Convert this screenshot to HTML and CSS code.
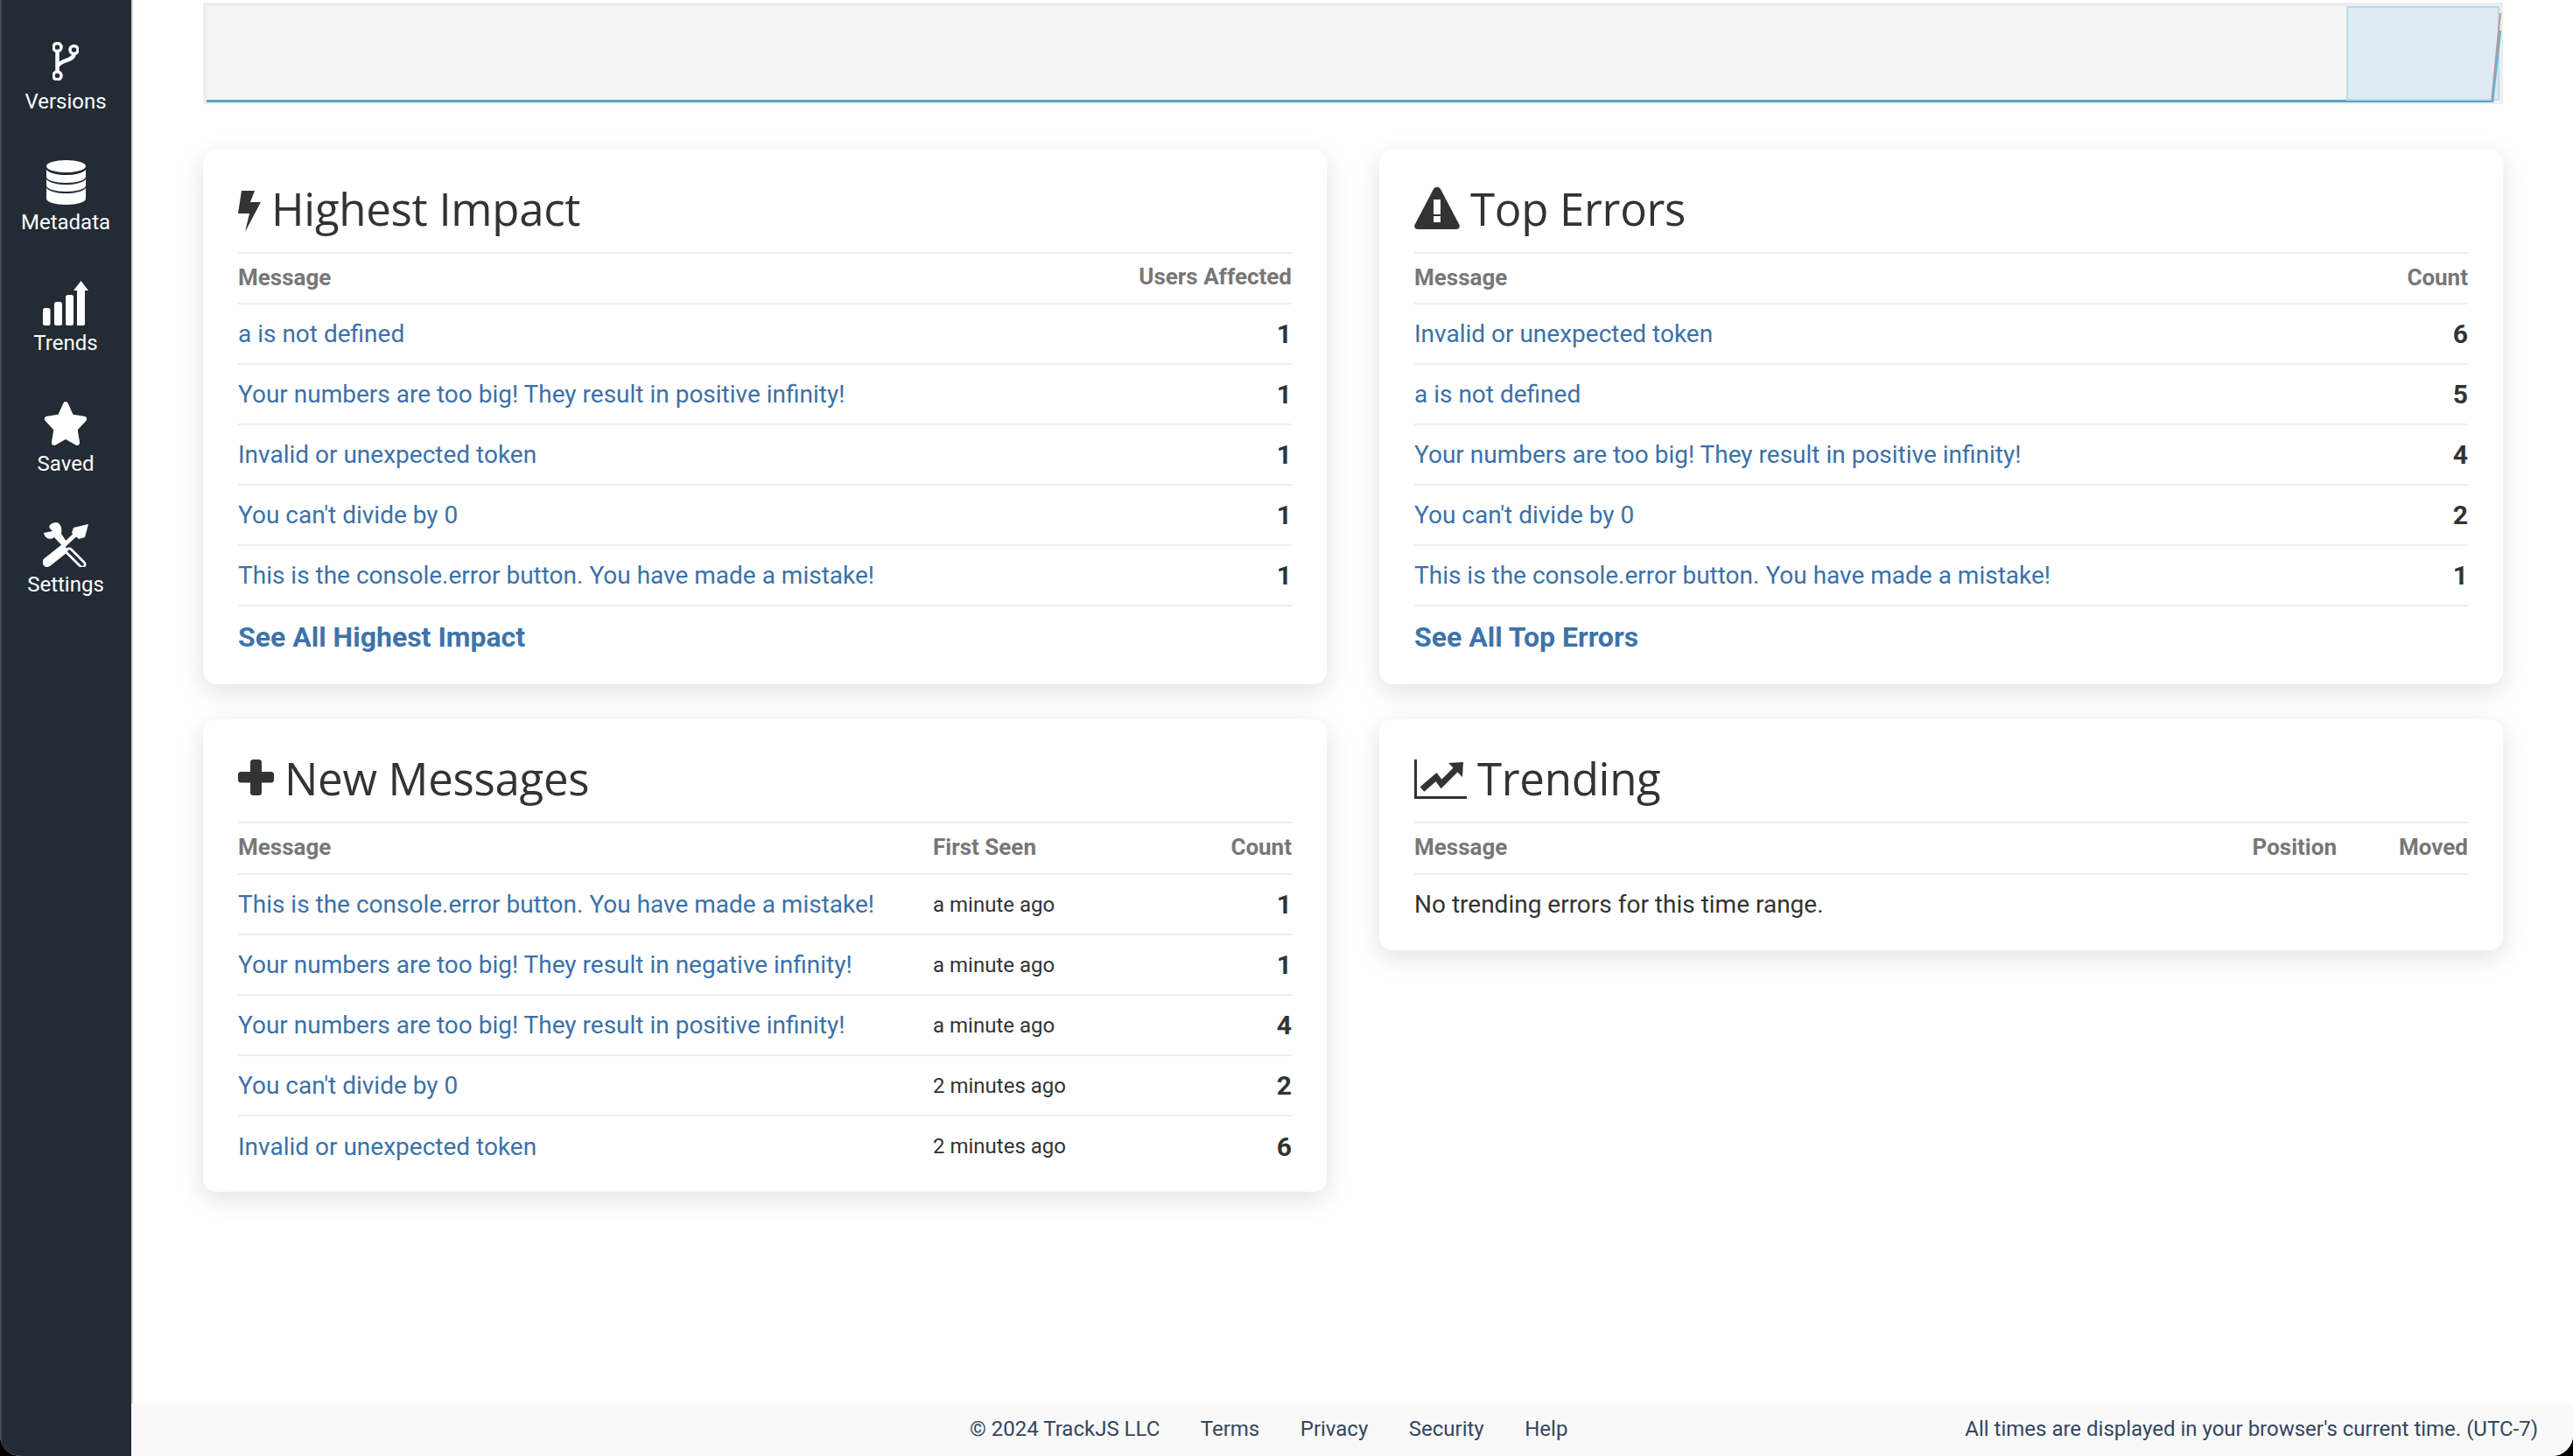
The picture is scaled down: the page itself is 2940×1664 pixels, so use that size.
FILE: index.html
```html
<!DOCTYPE html>
<html lang="en">
<head>
    <meta charset="UTF-8">
    <title>TrackJS Dashboard</title>
    <link rel="stylesheet" href="styles.css">
</head>
<body>
    <div class="app">
        <nav class="sidebar">
            <a class="nav-item">
                <span class="nav-icon">
                    <svg width="30" height="44" viewBox="0 0 30 44"><g class="line-icon"><circle cx="5.500" cy="6" r="4.500"/><circle cx="24.500" cy="9" r="4.500"/><circle cx="5.500" cy="38.500" r="4.500"/><path class="branch" d="M5.500 10V34"/><path class="branch" d="M24.500 13.500C24.500 22 9 20 5.500 28"/></g></svg>
                </span>
                <span class="nav-label">Versions</span>
            </a>
            <a class="nav-item">
                <span class="nav-icon">
                    <svg width="45" height="51" viewBox="0 0 45 51"><g class="solid-icon"><ellipse cx="22.500" cy="7" rx="22.500" ry="7"/><path d="M0 11C4 15 13 17 22.500 17S41 15 45 11V19C45 23 35 26 22.500 26S0 23 0 19Z"/><path d="M0 22C4 26 13 28 22.500 28S41 26 45 22V29C45 33 35 36 22.500 36S0 33 0 29Z"/><path d="M0 32C4 36 13 38 22.500 38S41 36 45 32V44C45 48 35 51 22.500 51S0 48 0 44Z"/></g></svg>
                </span>
                <span class="nav-label">Metadata</span>
            </a>
            <a class="nav-item">
                <span class="nav-icon">
                    <svg width="52" height="51" viewBox="0 0 52 51"><g class="solid-icon"><rect x="0" y="31" width="8.500" height="20" rx="2.500"/><rect x="13" y="24" width="9" height="27" rx="2.500"/><rect x="26" y="16" width="9" height="35" rx="2.500"/><path d="M39 51V11H35L43.500 0L52 11H48V49C48 50.500 47 51 46 51Z"/></g></svg>
                </span>
                <span class="nav-label">Trends</span>
            </a>
            <a class="nav-item">
                <span class="nav-icon">
                    <svg width="52" height="50" viewBox="0 0 576 512" preserveAspectRatio="none"><path class="solid-icon" d="M259.300 17.800L194 150.200 47.900 171.500c-26.200 3.800-36.700 36.100-17.700 54.600l105.700 103-25 145.500c-4.500 26.300 23.200 46 46.400 33.700L288 439.600l130.700 68.700c23.200 12.200 50.900-7.400 46.400-33.700l-25-145.500 105.700-103c19-18.500 8.500-50.800-17.700-54.600L382 150.200 316.700 17.800c-11.700-23.600-45.600-24.200-57.400 0z"/></svg>
                </span>
                <span class="nav-label">Saved</span>
            </a>
            <a class="nav-item">
                <span class="nav-icon">
                    <svg width="52" height="52" viewBox="0 0 52 52">
                        <path class="solid-icon" d="M16 1C9 1 6 5 8 8L11 11L1 13C2 19 8 22 13 18L22 28L27 23L21 14C22 8 21 3 16 1Z"/>
                        <path class="tool-gap" d="M5 47L24 30"/>
                        <path class="tool-shaft" d="M30 34L45 49"/>
                        <path class="tool-slot" d="M30 34L45 49"/>
                        <path class="tool-handle" d="M5 46.500L22 33"/>
                        <path class="tool-neck" d="M20 31L38 14"/>
                        <path class="solid-icon" d="M35 7L52 3L48 18L41 20L33 13Z"/>
                    </svg>
                </span>
                <span class="nav-label">Settings</span>
            </a>
        </nav>

        <div class="main">
            <div class="content">
                <div class="chart">
                    <div class="chart-plot"><div class="chart-line"></div></div>
                    <div class="chart-select"></div>
                    <svg class="chart-spike" width="14" height="110" viewBox="0 0 14 110">
                        <path class="spike-red" d="M1 106L11 4"/>
                        <path class="spike-blue" d="M2 106L11 24"/>
                    </svg>
                </div>

                <div class="grid">
                    <div class="column">
                        <section class="card">
                            <h2 class="card-title">
                                <svg class="icon-bolt" width="26" height="48" viewBox="0 0 26 48"><path class="title-icon" d="M4 1H19L14 14H26L8 48L13 27H0Z"/></svg>
                                Highest Impact
                            </h2>
                            <table class="errors">
                                <thead><tr><th>Message</th><th class="num num-wide">Users Affected</th></tr></thead>
                                <tbody>
                                    <tr><td><a>a is not defined</a></td><td class="num count">1</td></tr>
                                    <tr><td><a>Your numbers are too big! They result in positive infinity!</a></td><td class="num count">1</td></tr>
                                    <tr><td><a>Invalid or unexpected token</a></td><td class="num count">1</td></tr>
                                    <tr><td><a>You can't divide by 0</a></td><td class="num count">1</td></tr>
                                    <tr><td><a>This is the console.error button. You have made a mistake!</a></td><td class="num count">1</td></tr>
                                </tbody>
                            </table>
                            <a class="see-all">See All Highest Impact</a>
                        </section>

                        <section class="card card-flush">
                            <h2 class="card-title">
                                <svg width="41" height="41" viewBox="0 0 41 41"><g class="title-icon"><rect x="14" y="0" width="13" height="41" rx="3.500"/><rect x="0" y="14" width="41" height="12.500" rx="3.500"/></g></svg>
                                New Messages
                            </h2>
                            <table class="errors">
                                <thead><tr><th>Message</th><th class="seen">First Seen</th><th class="num">Count</th></tr></thead>
                                <tbody>
                                    <tr><td><a>This is the console.error button. You have made a mistake!</a></td><td class="seen time">a minute ago</td><td class="num count">1</td></tr>
                                    <tr><td><a>Your numbers are too big! They result in negative infinity!</a></td><td class="seen time">a minute ago</td><td class="num count">1</td></tr>
                                    <tr><td><a>Your numbers are too big! They result in positive infinity!</a></td><td class="seen time">a minute ago</td><td class="num count">4</td></tr>
                                    <tr><td><a>You can't divide by 0</a></td><td class="seen time">2 minutes ago</td><td class="num count">2</td></tr>
                                    <tr><td><a>Invalid or unexpected token</a></td><td class="seen time">2 minutes ago</td><td class="num count">6</td></tr>
                                </tbody>
                            </table>
                        </section>
                    </div>

                    <div class="column">
                        <section class="card">
                            <h2 class="card-title">
                                <svg width="52" height="49" viewBox="0 0 52 49"><path class="title-icon" fill-rule="evenodd" d="M22 3C24 0 28 0 30 3L51 43C53 46 51 49 48 49H4C1 49 -1 46 1 43ZM22 15V32H30V15ZM22 34V41H30V34Z"/></svg>
                                Top Errors
                            </h2>
                            <table class="errors">
                                <thead><tr><th>Message</th><th class="num">Count</th></tr></thead>
                                <tbody>
                                    <tr><td><a>Invalid or unexpected token</a></td><td class="num count">6</td></tr>
                                    <tr><td><a>a is not defined</a></td><td class="num count">5</td></tr>
                                    <tr><td><a>Your numbers are too big! They result in positive infinity!</a></td><td class="num count">4</td></tr>
                                    <tr><td><a>You can't divide by 0</a></td><td class="num count">2</td></tr>
                                    <tr><td><a>This is the console.error button. You have made a mistake!</a></td><td class="num count">1</td></tr>
                                </tbody>
                            </table>
                            <a class="see-all">See All Top Errors</a>
                        </section>

                        <section class="card card-flush">
                            <h2 class="card-title">
                                <svg class="icon-trend" width="60" height="45" viewBox="0 0 60 45">
                                    <path class="chart-axis" d="M1.500 0V43.500H60"/>
                                    <path class="chart-trend" d="M9 34L25 20L31 28L48 11"/>
                                    <path class="title-icon" d="M39 4L56 3L55 20Z"/>
                                </svg>
                                Trending
                            </h2>
                            <table class="errors">
                                <thead><tr><th>Message</th><th class="num position">Position</th><th class="num moved">Moved</th></tr></thead>
                            </table>
                            <p class="empty">No trending errors for this time range.</p>
                        </section>
                    </div>
                </div>
            </div>

            <footer class="footer">
                <div class="footer-links">
                    <span>© 2024 TrackJS LLC</span>
                    <a>Terms</a>
                    <a>Privacy</a>
                    <a>Security</a>
                    <a>Help</a>
                </div>
                <div class="footer-note">All times are displayed in your browser's current time. (UTC-7)</div>
            </footer>
        </div>
    </div>
</body>
</html>
```

FILE: styles.css
```css
html, body {
    margin: 0;
    padding: 0;
    height: 100%;
    background: #000;
    overflow: hidden;
}
body {
    font-family: Roboto, sans-serif;
    color: #333;
}
.app {
    display: flex;
    height: 1664px;
    background: #fff;
    border-radius: 0 0 24px 24px;
    overflow: hidden;
}

/* sidebar */
.sidebar {
    width: 146px;
    flex: none;
    padding: 44px 2px 0 0;
    background: #232b34;
    border-left: 2px solid #454b55;
    display: flex;
    flex-direction: column;
    gap: 50px;
}
.nav-item {
    display: flex;
    flex-direction: column;
    align-items: center;
    color: #fff;
}
.nav-icon {
    height: 52px;
    display: flex;
    align-items: center;
    justify-content: center;
}
.nav-label {
    margin-top: 4px;
    font-size: 24px;
    line-height: 32px;
    font-weight: 400;
}
.solid-icon {
    fill: #fff;
}
.line-icon {
    fill: none;
    stroke: #fff;
    stroke-width: 3.500;
}
.line-icon .branch {
    stroke-width: 4.500;
}
.tool-gap {
    fill: none;
    stroke: #232b34;
    stroke-width: 15;
}
.tool-shaft {
    fill: none;
    stroke: #fff;
    stroke-width: 9;
    stroke-linecap: round;
}
.tool-slot {
    fill: none;
    stroke: #232b34;
    stroke-width: 3.500;
    stroke-linecap: round;
}
.tool-handle {
    fill: none;
    stroke: #fff;
    stroke-width: 11;
    stroke-linecap: round;
}
.tool-neck {
    fill: none;
    stroke: #fff;
    stroke-width: 5;
}

/* main area */
.main {
    flex: 1;
    min-width: 0;
    display: flex;
    flex-direction: column;
    border-left: 2px solid #d5d5d5;
}
.content {
    flex: 1;
    padding: 3px 80px 0;
}
.chart {
    position: relative;
    height: 116px;
    box-sizing: border-box;
    background: #eee;
    padding: 4px 4px 2px 4px;
}
.chart-plot {
    height: 100%;
    background: #f5f5f5;
    display: flex;
    align-items: flex-end;
}
.chart-line {
    flex: 1;
    height: 3px;
    margin-right: 7px;
    background: #5aa3c0;
}
.chart-select {
    position: absolute;
    top: 4px;
    right: 4px;
    width: 175px;
    height: 108px;
    box-sizing: border-box;
    background: rgba(187, 220, 240, 0.4);
    border: 2px solid #b8dcef;
}
.chart-spike {
    position: absolute;
    top: 8px;
    right: 0;
}
.spike-red {
    fill: none;
    stroke: #c98f92;
    stroke-width: 2;
}
.spike-blue {
    fill: none;
    stroke: #6eb1cf;
    stroke-width: 2.500;
}

.grid {
    display: grid;
    grid-template-columns: 1fr 1fr;
    gap: 60px;
    margin-top: 52px;
}
.column {
    display: flex;
    flex-direction: column;
    gap: 40px;
    align-items: stretch;
}
.card {
    background: #fff;
    border-radius: 15px;
    box-shadow: 0 8px 30px rgba(0, 0, 0, 0.12);
    padding: 0 40px;
}
.card-title {
    display: flex;
    align-items: center;
    gap: 12px;
    height: 117px;
    box-sizing: border-box;
    margin: 0;
    padding-top: 16px;
    font-family: "Open Sans", sans-serif;
    font-size: 51px;
    font-weight: 500;
    letter-spacing: -0.3px;
    color: #333;
}
.icon-bolt {
    margin-top: 7px;
}
.icon-trend {
    margin-top: 4px;
}
.title-icon {
    fill: #333;
}
.chart-axis {
    fill: none;
    stroke: #333;
    stroke-width: 3;
}
.chart-trend {
    fill: none;
    stroke: #333;
    stroke-width: 7;
}

/* tables */
.errors {
    width: 100%;
    border-collapse: collapse;
    border-top: 2px solid #eee;
}
.errors th {
    box-sizing: border-box;
    height: 58px;
    padding: 0 0 3px;
    text-align: left;
    font-size: 26px;
    font-weight: 700;
    color: #777;
    border-bottom: 2px solid #eee;
}
.card-flush .errors th {
    height: 59px;
}
.errors td {
    box-sizing: border-box;
    height: 69px;
    padding: 0;
    font-size: 28px;
    border-bottom: 2px solid #eee;
}
.errors a {
    color: #3b71a8;
}
.card-flush .errors tbody tr:last-child td {
    border-bottom: none;
}
.errors th.num,
.errors td.num {
    text-align: right;
    width: 160px;
}
.errors th.num-wide {
    width: 300px;
    padding-bottom: 5px;
}
.errors th.seen,
.errors td.seen {
    width: 250px;
}
.errors th.position {
    width: 200px;
}
.errors th.moved {
    width: 150px;
}
.errors td.count {
    font-size: 30px;
    font-weight: 700;
    color: #333;
}
.errors td.time {
    font-size: 24px;
}
.see-all {
    display: block;
    height: 89px;
    line-height: 70px;
    font-size: 32px;
    font-weight: 700;
    color: #3e73a9;
}
.card-flush {
    padding-bottom: 18px;
}
.empty {
    margin: 0;
    height: 68px;
    line-height: 68px;
    font-size: 28px;
    color: #333;
}

/* footer */
.footer {
    height: 60px;
    box-sizing: border-box;
    padding-bottom: 2px;
    flex: none;
    margin-left: -2px;
    background: #f9f9f9;
    display: flex;
    align-items: center;
    font-size: 24px;
    color: #34465e;
}
.footer-links {
    display: flex;
    gap: 46.500px;
    margin-left: 958px;
}
.footer-note {
    margin-left: auto;
    padding-right: 40px;
}
```
